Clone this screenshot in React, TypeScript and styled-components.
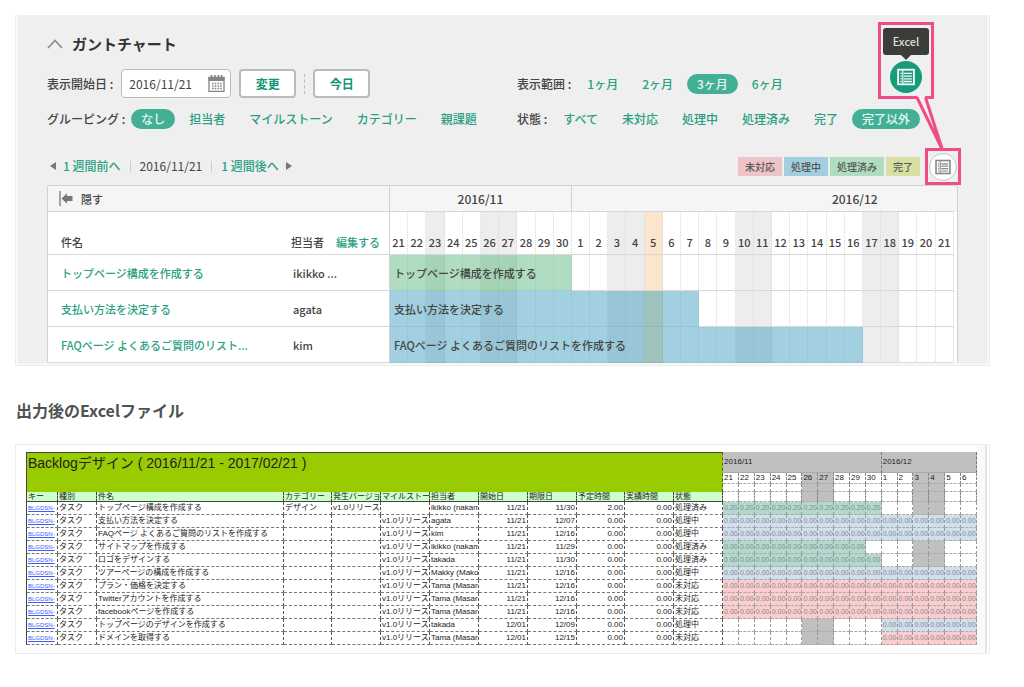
import React from "react";
import styled, { createGlobalStyle, css } from "styled-components";

const GlobalStyle = createGlobalStyle`
  *, *::before, *::after { box-sizing: border-box; }
  body {
    margin: 0;
    background: #fff;
    color: #444;
    font-family: "Noto Sans CJK JP", sans-serif;
    font-size: 12px;
    line-height: 20px;
  }
  a { text-decoration: none; }
  button, input { font: inherit; }
`;

const GREEN = "#2a9f82";
const PINK = "#ee4d87";

const Page = styled.main`
  padding: 15px 34px 32px 15px;
`;

const Figure = styled.section`
  border: 1px solid #ececec;
`;

const Panel = styled(Figure)`
  padding: 0 2px 2px;
  border-top: 0;
  background: #f8f8f8;
`;

const Gantt = styled.div`
  position: relative;
  padding: 18px 29px 0;
  background: #efefef;
`;

const GanttTitle = styled.h2`
  display: flex;
  align-items: center;
  gap: 9px;
  margin: 0 0 15px;
  color: #333;
  font-size: 15px;
  line-height: 21px;
  font-weight: 700;
`;

const Filters = styled.div`
  display: grid;
  grid-template-columns: 470px 1fr;
  row-gap: 11px;
`;

const FilterGroup = styled.div`
  display: flex;
  align-items: center;
  gap: 4px;
  font-weight: 500;
  white-space: nowrap;
`;

const FilterLabel = styled.span`
  margin-right: 2px;
`;

const Pill = styled.a<{ $on?: boolean }>`
  padding: 0 10px;
  border-radius: 10px;
  color: ${(p) => (p.$on ? "#e8f7f1" : GREEN)};
  background: ${(p) => (p.$on ? "#43b095" : "transparent")};
`;

const DateForm = styled.form`
  display: flex;
  align-items: center;
  gap: 8px;
  font-weight: 500;
  white-space: nowrap;
`;

const DateField = styled.div`
  display: flex;
  align-items: center;
  width: 110px;
  height: 29px;
  padding: 0 5px 0 7px;
  border: 1px solid #bbb;
  border-radius: 4px;
  background: #fff;
`;

const DateInput = styled.input`
  flex: 1;
  min-width: 0;
  padding: 0;
  border: 0;
  outline: 0;
  background: transparent;
  color: #444;
  font-weight: 400;
`;

const FormButton = styled.button`
  width: 57px;
  height: 29px;
  padding: 0;
  border: 2px solid #bbb;
  border-radius: 4px;
  background: #fff;
  color: #129576;
  font-weight: 700;
`;

const DottedRule = styled.span`
  height: 20px;
  border-left: 1px dashed #bbb;
`;

const NavRow = styled.div`
  display: flex;
  align-items: center;
  justify-content: space-between;
  margin: 27px 38px 9px 3px;
`;

const WeekNav = styled.nav`
  display: flex;
  align-items: center;
  gap: 7px;
  white-space: nowrap;
`;

const WeekLink = styled.a`
  color: ${GREEN};
  font-weight: 500;
`;

const Divider = styled.span`
  height: 11px;
  margin: 0 2px;
  border-left: 1px solid #ccc;
`;

const Legend = styled.ul`
  display: flex;
  gap: 2px;
  margin: 0;
  padding: 0;
  list-style: none;
`;

const LegendItem = styled.li<{ $bg: string }>`
  padding: 0 7px;
  background: ${(p) => p.$bg};
  color: #555;
  font-size: 10px;
  line-height: 19px;
  font-weight: 500;
`;

const ChartFrame = styled.div`
  padding-right: 3px;
  border: 1px solid #d2d2d2;
  border-bottom: 0;
  border-radius: 3px 3px 0 0;
  background: linear-gradient(#f5f5f5 26px, #fff 26px);
`;

const ChartTable = styled.table`
  width: 100%;
  table-layout: fixed;
  border-collapse: separate;
  border-spacing: 0;
  font-size: 11px;
  line-height: 16px;
  color: #444;

  th, td {
    padding: 0;
    border-bottom: 1px solid #d8d8d8;
    font-weight: 500;
    white-space: nowrap;
    text-align: left;
  }
`;

const GroupHead = styled.th`
  height: 26px;
  border-right: 1px solid #d2d2d2;
  background: #f5f5f5;
`;

const HideButton = styled.button`
  display: flex;
  align-items: center;
  gap: 8px;
  margin-left: 11px;
  padding: 0;
  border: 0;
  background: none;
  color: inherit;
`;

const MonthHead = styled.th<{ $late?: boolean }>`
  background: #f5f5f5;
  && {
    font-size: 12px;
    ${(p) =>
      p.$late
        ? css`padding-left: 260px;`
        : css`
            text-align: center;
            border-right: 1px solid #d2d2d2;
          `}
  }
`;

const ColHead = styled.th`
  height: 43px;
  vertical-align: bottom;
  && { padding: 0 0 4px 13px; }
`;

const PersonHead = styled(ColHead)`
  border-right: 1px solid #d2d2d2;
  && { padding-left: 4px; }
  a { margin-left: 12px; color: ${GREEN}; }
`;

type DayKind = "work" | "off" | "today";
type Bar = "none" | "green" | "blue";

const dayColors: Record<Bar, Record<DayKind, string>> = {
  none: { work: "#fff", off: "#ededed", today: "#fbe5cc" },
  green: { work: "#b0ddc1", off: "#a5d3b3", today: "#b5cfaa" },
  blue: { work: "#a2d0e0", off: "#98c6d6", today: "#9dc3bc" },
};

const DayHead = styled.th<{ $kind: DayKind }>`
  vertical-align: bottom;
  background: ${(p) => dayColors.none[p.$kind]};
  && {
    padding-bottom: 4px;
    border-right: 1px dotted #d8d8d8;
    text-align: center;
  }
`;

const DayCell = styled.td<{ $kind: DayKind; $bar: Bar }>`
  background: ${(p) => dayColors[p.$bar][p.$kind]};
  && {
    border-right: 1px ${(p) => (p.$bar === "none" ? "dotted #d8d8d8" : "solid rgba(0, 60, 80, 0.05)")};
    ${(p) => p.$bar !== "none" && "border-bottom-color: rgba(0, 60, 80, 0.08);"}
  }
`;

const BarLabel = styled.span`
  position: relative;
  display: block;
  width: 0;
  margin-left: 4px;
`;

const TaskCell = styled.td`
  height: 36px;
  && { padding-left: 13px; }
  a { color: ${GREEN}; }
`;

const PersonCell = styled.td`
  && {
    padding-left: 6px;
    border-right: 1px solid #d2d2d2;
  }
`;

const Callout = styled.div`
  position: absolute;
  top: 7px;
  right: 26px;
  width: 83px;
  height: 163px;
  pointer-events: none;
`;

const CalloutBox = styled.div<{ $large?: boolean }>`
  position: absolute;
  display: flex;
  flex-direction: column;
  align-items: center;
  border: 3px solid ${PINK};
  ${(p) =>
    p.$large
      ? css`
          top: 0;
          left: 0;
          width: 56px;
          height: 77px;
          padding-top: 3px;
        `
      : css`
          right: 0;
          bottom: 0;
          width: 36px;
          height: 37px;
          justify-content: center;
        `}
`;

const CalloutPointer = styled.svg`
  position: absolute;
  inset: 0;
`;

const Tooltip = styled.span`
  position: relative;
  width: 46px;
  border-radius: 3px;
  background: #3b3d38;
  color: #ddd;
  font-size: 11px;
  line-height: 27px;
  font-weight: 500;
  text-align: center;

  &::after {
    content: "";
    position: absolute;
    top: 27px;
    left: 18px;
    border: 5px solid transparent;
    border-top-color: #3b3d38;
  }
`;

const RoundButton = styled.button<{ $active?: boolean }>`
  display: flex;
  flex: none;
  align-items: center;
  justify-content: center;
  width: ${(p) => (p.$active ? 32 : 28)}px;
  height: ${(p) => (p.$active ? 32 : 28)}px;
  margin-top: ${(p) => (p.$active ? 6 : 0)}px;
  padding: 0;
  border: ${(p) => (p.$active ? "0" : "1px solid #c4c4c4")};
  border-radius: 50%;
  background: ${(p) => (p.$active ? "#179b7a" : "#fff")};
  color: ${(p) => (p.$active ? "#fff" : "#888")};
  pointer-events: auto;
`;

const Heading = styled.h3`
  margin: 32px 0 21px 1px;
  color: #4c5350;
  font-size: 16px;
  line-height: 25px;
  font-weight: 700;
`;

const SheetFigure = styled(Figure)`
  display: flex;
  padding-right: 2px;
`;

const SheetArea = styled.div`
  flex: 1;
  min-width: 0;
  padding: 7px 0 8px 10px;
`;

const ScrollEdge = styled.div`
  width: 10px;
  border-right: 2px solid #e4e4e4;
  background: #f9f9f9;
`;

const SheetTable = styled.table`
  width: 100%;
  table-layout: fixed;
  border-collapse: separate;
  border-spacing: 0;
  border-left: 1px solid #444;
  color: #222;
  font-family: "Liberation Sans", "Noto Sans CJK JP", sans-serif;
  font-size: 8px;
  line-height: 12px;

  th, td {
    padding: 0 1px;
    overflow: hidden;
    font-weight: 400;
    text-align: left;
    white-space: nowrap;
  }
`;

const SheetTitle = styled.th`
  height: 40px;
  border-top: 1px solid #444;
  border-right: 1px dashed #555;
  background: #99cc00;
  vertical-align: top;
  && {
    font-size: 14px;
    line-height: 20px;
  }
`;

const SheetMonth = styled.th`
  height: 21px;
  border-right: 1px dashed #777;
  border-bottom: 1px solid #aaa;
  background: #c0c0c0;
`;

const SheetDate = styled.th<{ $off: boolean; $h: number }>`
  height: ${(p) => p.$h}px;
  border-right: 1px dashed #888;
  border-bottom: 1px dashed #aaa;
  background: ${(p) => (p.$off ? "#c0c0c0" : "#fff")};
  line-height: ${(p) => p.$h - 1}px;
`;

const SheetHead = styled.th`
  height: 10px;
  border-right: 1px dashed #444;
  border-bottom: 1px solid #444;
  background: #ccffcc;
  line-height: 9px;
`;

const SheetCell = styled.td<{ $right?: boolean }>`
  border-right: 1px dashed #555;
  border-bottom: 1px dashed #777;
  && { text-align: ${(p) => (p.$right ? "right" : "left")}; }
  a {
    color: #3b5bff;
    font-size: 6px;
    text-decoration: underline;
  }
`;

const HourCell = styled.td<{ $bg: string }>`
  border-right: 1px dashed #999;
  border-bottom: 1px dashed #aaa;
  background: ${(p) => p.$bg};
  color: #858b8b;
  && {
    padding: 0 0 0 1px;
    font-size: 7px;
  }
`;

const ListIcon = ({ size }: { size: number }) => (
  <svg width={size} height={size} viewBox="0 0 16 16" fill="none" stroke="currentColor" aria-hidden="true">
    <rect x="1" y="1.5" width="14" height="13" strokeWidth="1.6" />
    <path d="M5.2 2v12" strokeWidth="1" />
    <path d="M3 4.8h1.2M3 7.2h1.2M3 9.6h1.2M3 12h1.2M6.2 4.8h7M6.2 7.2h7M6.2 9.6h7M6.2 12h7" strokeWidth="1.2" />
  </svg>
);

const CaretUp = () => (
  <svg width="16" height="10" viewBox="0 0 16 10" fill="none" stroke="#8c8c8c" strokeWidth="1.7" aria-hidden="true">
    <path d="M1 9l7-7.5L15 9" />
  </svg>
);

const CalendarIcon = () => (
  <svg width="17" height="17" viewBox="0 0 17 17" aria-hidden="true">
    <path d="M1 2.5h15v14H1z" fill="#fff" stroke="#858585" strokeWidth="1.3" />
    <path d="M.5 2h16v4H.5z" fill="#858585" />
    <path d="M3.5 0v4M7 0v4M10.3 0v4M13.5 0v4" stroke="#858585" strokeWidth="1.6" />
    <path d="M4 8.5h10M4 11h10M4 13.5h10" stroke="#858585" strokeWidth="1.4" strokeDasharray="1.6 1.1" />
  </svg>
);

const HideIcon = () => (
  <svg width="14" height="15" viewBox="0 0 14 15" aria-hidden="true">
    <path d="M1 0v15" stroke="#777" strokeWidth="1.3" />
    <path d="M2.5 7.5L8 2.3v2.7h5.5v5H8v2.7z" fill="#777" />
  </svg>
);

const Triangle = ({ dir }: { dir: "left" | "right" }) => (
  <svg width="6" height="8" viewBox="0 0 6 8" fill="#777" aria-hidden="true">
    <path d={dir === "left" ? "M6 0v8L0 4z" : "M0 0v8l6-4z"} />
  </svg>
);

const days = [...Array.from({ length: 10 }, (_, i) => 21 + i), ...Array.from({ length: 21 }, (_, i) => 1 + i)];
const offDays = [2, 5, 6, 12, 13, 19, 20, 26, 27];
const kindOf = (i: number): DayKind => (i === 14 ? "today" : offDays.includes(i) ? "off" : "work");

const tasks: { name: string; short?: string; person: string; length: number; bar: Bar }[] = [
  { name: "トップページ構成を作成する", person: "ikikko ...", length: 10, bar: "green" },
  { name: "支払い方法を決定する", person: "agata", length: 17, bar: "blue" },
  {
    name: "FAQページ よくあるご質問のリストを作成する",
    short: "FAQページ よくあるご質問のリスト...",
    person: "kim",
    length: 26,
    bar: "blue",
  },
];

const groupings = ["なし", "担当者", "マイルストーン", "カテゴリー", "親課題"];
const ranges = ["1ヶ月", "2ヶ月", "3ヶ月", "6ヶ月"];
const states = ["すべて", "未対応", "処理中", "処理済み", "完了", "完了以外"];
const legend = [
  ["未対応", "#efc4c9"],
  ["処理中", "#a2cfe0"],
  ["処理済み", "#b0dcc0"],
  ["完了", "#d7dfa3"],
];

const sheetColumns: [string, number][] = [
  ["キー", 31],
  ["種別", 39],
  ["件名", 187],
  ["カテゴリー", 48],
  ["発生バージョ", 49],
  ["マイルストー", 49],
  ["担当者", 49],
  ["開始日", 49],
  ["期限日", 49],
  ["予定時間", 48],
  ["実績時間", 49],
  ["状態", 49],
];

const sheetDays = days.slice(0, 16);
const sheetOff = [5, 6, 12, 13];
const stateColors: Record<string, string> = {
  処理済み: "#b3d9cf",
  処理中: "#d0deee",
  未対応: "#fbcdce",
};

// name, person, start, due, state, first filled day, last filled day
type SheetRow = [string, string, string, string, string, number, number];
const sheetRows: SheetRow[] = [
  ["トップページ構成を作成する", "ikikko (nakam", "11/21", "11/30", "処理済み", 0, 9],
  ["支払い方法を決定する", "agata", "11/21", "12/07", "処理中", 0, 15],
  ["FAQページ よくあるご質問のリストを作成する", "kim", "11/21", "12/16", "処理中", 0, 15],
  ["サイトマップを作成する", "ikikko (nakam", "11/21", "11/29", "処理済み", 0, 8],
  ["ロゴをデザインする", "takada", "11/21", "11/30", "処理済み", 0, 9],
  ["ツアーページの構成を作成する", "Makky (Makot", "11/21", "12/16", "処理中", 0, 15],
  ["プラン・価格を決定する", "Tama (Masan", "11/21", "12/16", "未対応", 0, 15],
  ["Twitterアカウントを作成する", "Tama (Masan", "11/21", "12/16", "未対応", 0, 15],
  ["facebookページを作成する", "Tama (Masan", "11/21", "12/16", "未対応", 0, 15],
  ["トップページのデザインを作成する", "takada", "12/01", "12/09", "処理中", 10, 15],
  ["ドメインを取得する", "Tama (Masan", "12/01", "12/15", "未対応", 10, 15],
];

function FilterLinks({ label, items, active }: { label: string; items: string[]; active: string }) {
  return (
    <FilterGroup>
      <FilterLabel>{label} :</FilterLabel>
      {items.map((item) => (
        <Pill key={item} href="#" $on={item === active}>
          {item}
        </Pill>
      ))}
    </FilterGroup>
  );
}

function ExcelCallout() {
  return (
    <Callout>
      <CalloutBox $large>
        <Tooltip>Excel</Tooltip>
        <RoundButton type="button" $active aria-label="Excel">
          <ListIcon size={18} />
        </RoundButton>
      </CalloutBox>
      <CalloutBox>
        <RoundButton type="button" aria-label="Excelに出力">
          <ListIcon size={16} />
        </RoundButton>
      </CalloutBox>
      <CalloutPointer width="83" height="163" viewBox="0 0 83 163" aria-hidden="true">
        <path d="M39 74L64.5 128L47 74z" fill="#f8eff2" />
        <path d="M39 75.5L64.5 128L47.5 75.5" fill="none" stroke={PINK} strokeWidth="3" />
      </CalloutPointer>
    </Callout>
  );
}

function GanttChart() {
  return (
    <ChartFrame>
      <ChartTable>
        <colgroup>
          <col style={{ width: 239 }} />
          <col style={{ width: 103 }} />
          {days.map((_, i) => (
            <col key={i} />
          ))}
        </colgroup>
        <thead>
          <tr>
            <GroupHead colSpan={2}>
              <HideButton type="button">
                <HideIcon />
                隠す
              </HideButton>
            </GroupHead>
            <MonthHead colSpan={10}>2016/11</MonthHead>
            <MonthHead colSpan={21} $late>
              2016/12
            </MonthHead>
          </tr>
          <tr>
            <ColHead>件名</ColHead>
            <PersonHead>
              担当者<a href="#">編集する</a>
            </PersonHead>
            {days.map((d, i) => (
              <DayHead key={i} $kind={kindOf(i)}>
                {d}
              </DayHead>
            ))}
          </tr>
        </thead>
        <tbody>
          {tasks.map((t) => (
            <tr key={t.name}>
              <TaskCell>
                <a href="#">{t.short ?? t.name}</a>
              </TaskCell>
              <PersonCell>{t.person}</PersonCell>
              {days.map((_, i) => (
                <DayCell key={i} $kind={kindOf(i)} $bar={i < t.length ? t.bar : "none"}>
                  {i === 0 && <BarLabel>{t.name}</BarLabel>}
                </DayCell>
              ))}
            </tr>
          ))}
        </tbody>
      </ChartTable>
    </ChartFrame>
  );
}

function ExcelSheet() {
  return (
    <SheetTable>
      <colgroup>
        {sheetColumns.map(([name, width]) => (
          <col key={name} style={{ width }} />
        ))}
        {sheetDays.map((d) => (
          <col key={d} />
        ))}
      </colgroup>
      <thead>
        <tr>
          <SheetTitle colSpan={12} rowSpan={3}>
            Backlogデザイン ( 2016/11/21 - 2017/02/21 )
          </SheetTitle>
          <SheetMonth colSpan={10}>2016/11</SheetMonth>
          <SheetMonth colSpan={6}>2016/12</SheetMonth>
        </tr>
        <tr>
          {sheetDays.map((d, i) => (
            <SheetDate key={d} $off={sheetOff.includes(i)} $h={11}>
              {d}
            </SheetDate>
          ))}
        </tr>
        <tr>
          {sheetDays.map((d, i) => (
            <SheetDate key={d} $off={sheetOff.includes(i)} $h={8} />
          ))}
        </tr>
        <tr>
          {sheetColumns.map(([name]) => (
            <SheetHead key={name}>{name}</SheetHead>
          ))}
          {sheetDays.map((d, i) => (
            <SheetDate key={d} $off={sheetOff.includes(i)} $h={10} />
          ))}
        </tr>
      </thead>
      <tbody>
        {sheetRows.map(([name, person, start, due, state, from, to], r) => (
          <tr key={name}>
            <SheetCell>
              <a href="#">BLGDSN-</a>
            </SheetCell>
            <SheetCell>タスク</SheetCell>
            <SheetCell>{name}</SheetCell>
            <SheetCell>{r === 0 ? "デザイン" : ""}</SheetCell>
            <SheetCell>{r === 0 ? "v1.0リリース" : ""}</SheetCell>
            <SheetCell>{r === 0 ? "" : "v1.0リリース"}</SheetCell>
            <SheetCell>{person}</SheetCell>
            <SheetCell $right>{start}</SheetCell>
            <SheetCell $right>{due}</SheetCell>
            <SheetCell $right>{r === 0 ? "2.00" : "0.00"}</SheetCell>
            <SheetCell $right>0.00</SheetCell>
            <SheetCell>{state}</SheetCell>
            {sheetDays.map((d, i) => {
              const filled = i >= from && i <= to;
              const bg = filled ? stateColors[state] : sheetOff.includes(i) ? "#c0c0c0" : "#fff";
              return (
                <HourCell key={d} $bg={bg}>
                  {filled ? (r === 0 ? "0.20" : "0.00") : ""}
                </HourCell>
              );
            })}
          </tr>
        ))}
      </tbody>
    </SheetTable>
  );
}

export default function App() {
  return (
    <>
      <GlobalStyle />
      <Page>
        <Panel>
          <Gantt>
            <GanttTitle>
              <CaretUp />
              ガントチャート
            </GanttTitle>
            <Filters>
              <DateForm onSubmit={(e) => e.preventDefault()}>
                <label htmlFor="start">表示開始日 :</label>
                <DateField>
                  <DateInput id="start" type="text" defaultValue="2016/11/21" />
                  <CalendarIcon />
                </DateField>
                <FormButton type="submit">変更</FormButton>
                <DottedRule />
                <FormButton type="button">今日</FormButton>
              </DateForm>
              <FilterLinks label="表示範囲" items={ranges} active="3ヶ月" />
              <FilterLinks label="グルーピング" items={groupings} active="なし" />
              <FilterLinks label="状態" items={states} active="完了以外" />
            </Filters>
            <NavRow>
              <WeekNav>
                <Triangle dir="left" />
                <WeekLink href="#">1 週間前へ</WeekLink>
                <Divider />
                <span>2016/11/21</span>
                <Divider />
                <WeekLink href="#">1 週間後へ</WeekLink>
                <Triangle dir="right" />
              </WeekNav>
              <Legend>
                {legend.map(([name, color]) => (
                  <LegendItem key={name} $bg={color}>
                    {name}
                  </LegendItem>
                ))}
              </Legend>
            </NavRow>
            <GanttChart />
            <ExcelCallout />
          </Gantt>
        </Panel>
        <Heading>出力後のExcelファイル</Heading>
        <SheetFigure>
          <SheetArea>
            <ExcelSheet />
          </SheetArea>
          <ScrollEdge />
        </SheetFigure>
      </Page>
    </>
  );
}
